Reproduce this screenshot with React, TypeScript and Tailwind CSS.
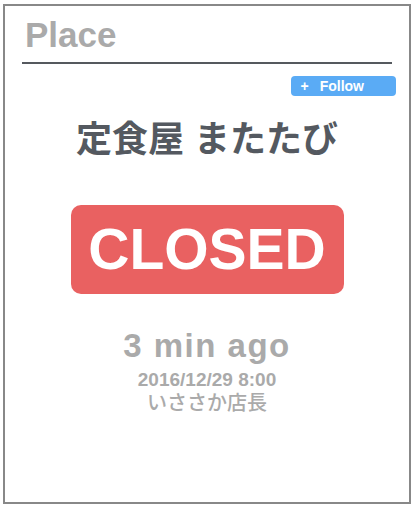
import React from "react";

export default function App() {
  return (
    <div className="w-[416px] h-[511px] bg-white pt-[4px] pl-[3px] font-['Liberation_Sans',Arial,sans-serif]">
      <div className="w-[408px] h-[500px] border-2 border-[#888888] flex flex-col">
        <div className="mx-[17px] mt-[11px] pb-[10px] border-b-2 border-[#55595e]">
          <div className="pl-[3px] text-[35px] leading-none font-bold text-[#aaaaaa]">Place</div>
        </div>
        <div className="flex justify-end mr-[13px] mt-[12px]">
          <div className="w-[105px] h-[20px] rounded-[4px] bg-[#5aabf5] flex items-center pl-[9.5px] text-white text-[14px] font-bold leading-none">
            <span>+</span>
            <span className="ml-[11px]">Follow</span>
          </div>
        </div>
        <div className="mt-[26px] text-center text-[36px] leading-none font-bold text-[#545960] font-['Liberation_Sans','Noto_Sans_CJK_JP',sans-serif]">
          定食屋 またたび
        </div>
        <div className="mt-[47px] flex justify-center">
          <div className="w-[273px] h-[89px] rounded-[10px] bg-[#e96161] flex items-center justify-center text-white text-[57px] font-bold leading-none">
            CLOSED
          </div>
        </div>
        <div className="mt-[35px] text-center text-[33px] leading-none font-bold tracking-[1.5px] text-[#aaaaaa]">
          3 min ago
        </div>
        <div className="mt-[8px] text-center text-[19px] leading-none font-bold text-[#aaaaaa]">
          2016/12/29 8:00
        </div>
        <div className="mt-[4px] text-center text-[20px] leading-none font-medium text-[#aaaaaa] font-['Liberation_Sans','Noto_Sans_CJK_JP',sans-serif]">
          いささか店長
        </div>
      </div>
    </div>
  );
}
